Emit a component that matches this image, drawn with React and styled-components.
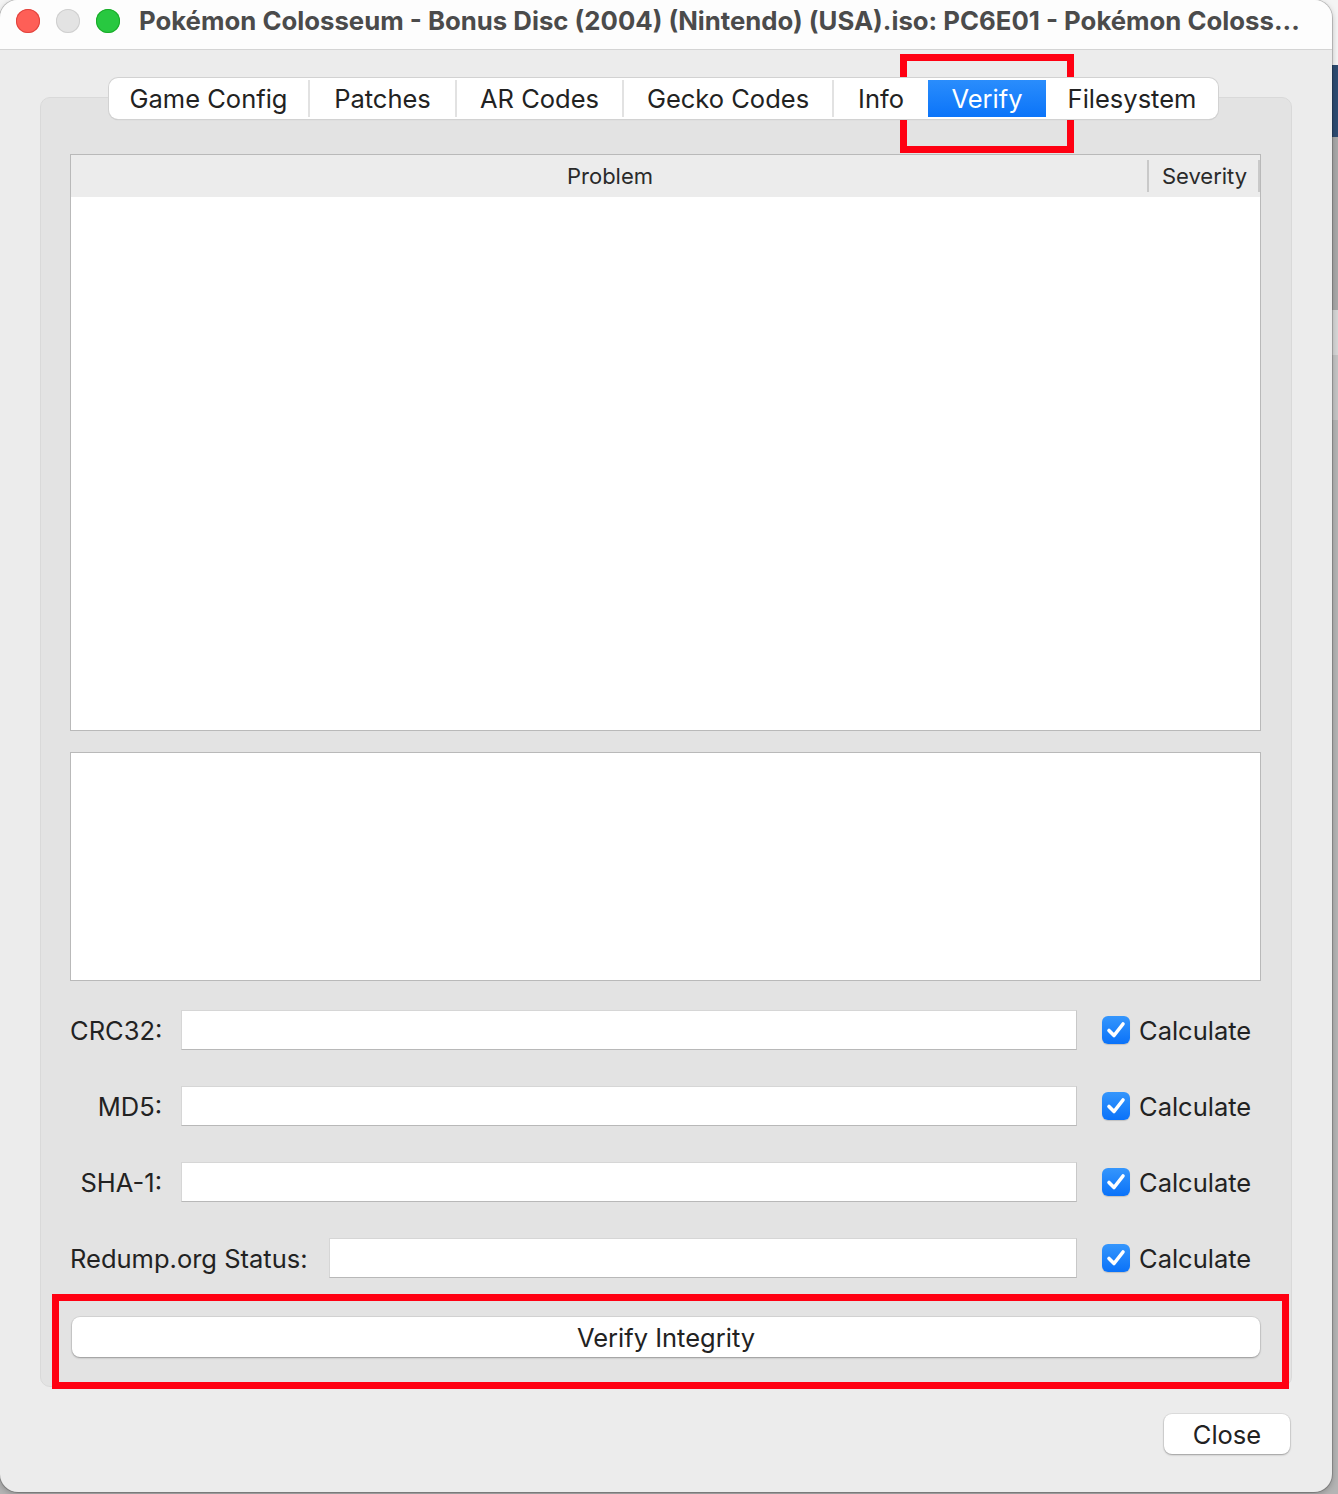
import React from 'react';
import styled, { createGlobalStyle } from 'styled-components';

const GlobalStyle = createGlobalStyle`
  html, body {
    margin: 0;
    padding: 0;
    background: #a9a9a9;
  }
  body {
    font-family: Inter, "Noto Sans", "Liberation Sans", sans-serif;
    color: #222;
    -webkit-font-smoothing: antialiased;
  }
`;

const Desktop = styled.div`
  position: relative;
  width: 1338px;
  height: 1494px;
  overflow: hidden;
  background: linear-gradient(
    to bottom,
    #f4f4f4 0 65px,
    #2d4b71 65px 137px,
    #a9a9a9 137px 310px,
    #d6d6d6 310px 355px,
    #c4c4c4 355px 420px,
    #b4b4b4 420px
  );
`;

const Window = styled.div`
  width: 1332px;
  height: 1492px;
  border-radius: 18px;
  background: #ececec;
  box-shadow: 0 0 0 1px rgba(0, 0, 0, 0.18), 0 2px 6px rgba(0, 0, 0, 0.25);
  overflow: hidden;
  display: flex;
  flex-direction: column;
`;

const TitleBar = styled.div`
  height: 50px;
  box-sizing: border-box;
  flex: none;
  display: flex;
  align-items: center;
  padding: 0 0 8px 16px;
  background: #fdfdfd;
  border-bottom: 1px solid #d4d4d4;
`;

const Lights = styled.div`
  display: flex;
  gap: 16px;
`;

const Light = styled.span`
  width: 24px;
  height: 24px;
  border-radius: 50%;
  background: ${p => p.$color};
  box-shadow: inset 0 0 0 1px ${p => p.$rim};
`;

const Title = styled.div`
  margin-left: 19px;
  font-size: 25.75px;
  font-weight: 700;
  color: #4b4b4b;
  white-space: nowrap;
`;

const Body = styled.div`
  flex: 1;
  display: flex;
  flex-direction: column;
  padding: 28px 40px 0 40px;
`;

const TabBar = styled.div`
  position: relative;
  z-index: 1;
  align-self: center;
  margin-left: -5px;
  display: flex;
  height: 41px;
  box-sizing: border-box;
  background: #fff;
  border-radius: 9px;
  box-shadow: 0 0 0 1px #d2d2d2, 0 1px 1px rgba(0, 0, 0, 0.18);
  margin-bottom: -22px;
`;

const Tab = styled.div`
  box-sizing: border-box;
  width: ${p => p.$w}px;
  display: flex;
  align-items: center;
  justify-content: center;
  font-size: 25.5px;
  color: ${p => (p.$active ? '#fff' : '#222')};
  background: ${p => (p.$active ? 'linear-gradient(#2a8dfc, #0b74f9)' : 'transparent')};
  margin: ${p => (p.$active || p.$sep ? '2px 0' : '0')};
  border-left: ${p => (p.$sep ? '2px solid #e2e2e2' : 'none')};
  white-space: nowrap;
  overflow: hidden;
`;

const Panel = styled.div`
  background: #e3e3e3;
  border: 1px solid #d9d9d9;
  border-radius: 10px;
  padding: 56px 30px 29px 29px;
  display: flex;
  flex-direction: column;
`;

const Table = styled.div`
  height: 577px;
  box-sizing: border-box;
  border: 1px solid #b9b9b9;
  background: #fff;
  display: flex;
  flex-direction: column;
`;

const TableHead = styled.div`
  height: 42px;
  display: flex;
  background: #ececec;
`;

const HeadCell = styled.div`
  display: flex;
  align-items: center;
  justify-content: center;
  font-size: 22px;
  color: #2a2a2a;
  ${p => (p.$grow ? 'flex: 1;' : `width: ${p.$w}px;`)}
  position: relative;
  &::after {
    content: '';
    position: absolute;
    right: 0;
    top: 5px;
    bottom: 5px;
    width: 2px;
    background: #c9c9c9;
  }
`;

const Details = styled.div`
  margin-top: 21px;
  height: 229px;
  box-sizing: border-box;
  border: 1px solid #b9b9b9;
  background: #fff;
`;

const HashList = styled.div`
  margin-top: 29px;
  display: flex;
  flex-direction: column;
  gap: 36px;
`;

const HashRow = styled.div`
  display: flex;
  align-items: center;
  height: 40px;
`;

const Label = styled.div`
  font-size: 25.5px;
  color: #222;
  white-space: nowrap;
  text-align: right;
  ${p => (p.$w ? `width: ${p.$w}px;` : '')}
  margin-right: ${p => p.$gap}px;
`;

const Field = styled.div`
  flex: 1;
  align-self: stretch;
  background: #fff;
  border: 1px solid #d6d6d6;
  border-bottom-color: #b8b8b8;
  border-right-color: #c8c8c8;
  box-sizing: border-box;
`;

const CheckGroup = styled.label`
  width: 159px;
  margin-left: 25px;
  display: flex;
  align-items: center;
  gap: 9px;
  font-size: 25.5px;
  color: #222;
`;

const Box = styled.span`
  width: 28px;
  height: 28px;
  border-radius: 6px;
  background: linear-gradient(#3596fc, #0a72f9);
  display: flex;
  align-items: center;
  justify-content: center;
  box-shadow: 0 1px 1px rgba(0, 0, 0, 0.15);
`;

const WideButton = styled.div`
  margin-top: 39px;
  margin-left: 2px;
  margin-right: 1px;
  height: 40px;
  border-radius: 8px;
  background: #fff;
  box-shadow: 0 0 0 1px rgba(0, 0, 0, 0.06), 0 1px 2px rgba(0, 0, 0, 0.3);
  display: flex;
  align-items: center;
  justify-content: center;
  font-size: 25.5px;
  color: #222;
`;

const Footer = styled.div`
  display: flex;
  justify-content: flex-end;
  padding: 27px 2px 0 0;
`;

const CloseButton = styled.div`
  width: 126px;
  height: 40px;
  border-radius: 8px;
  background: #fff;
  box-shadow: 0 0 0 1px rgba(0, 0, 0, 0.06), 0 1px 2px rgba(0, 0, 0, 0.3);
  display: flex;
  align-items: center;
  justify-content: center;
  font-size: 25.5px;
  color: #222;
`;

const Marker = styled.div`
  position: absolute;
  left: ${p => p.$x}px;
  top: ${p => p.$y}px;
  width: ${p => p.$w}px;
  height: ${p => p.$h}px;
  box-sizing: border-box;
  border: 7px solid #ff0012;
  pointer-events: none;
`;

const tabs = [
  { name: 'Game Config', w: 199 },
  { name: 'Patches', w: 147 },
  { name: 'AR Codes', w: 167 },
  { name: 'Gecko Codes', w: 210 },
  { name: 'Info', w: 96 },
  { name: 'Verify', w: 118, active: true },
  { name: 'Filesystem', w: 172 },
];

const hashes = [
  { label: 'CRC32:', w: 92, gap: 19 },
  { label: 'MD5:', w: 92, gap: 19 },
  { label: 'SHA-1:', w: 92, gap: 19 },
  { label: 'Redump.org Status:', gap: 21 },
];

function Check() {
  return (
    <Box>
      <svg width="22" height="22" viewBox="0 0 22 22">
        <path d="M4 11.5 L9 16.5 L18 5" fill="none" stroke="#fff" strokeWidth="3.6" strokeLinecap="round" strokeLinejoin="round" />
      </svg>
    </Box>
  );
}

export default function App() {
  return (
    <Desktop>
      <GlobalStyle />
      <Window>
        <TitleBar>
          <Lights>
            <Light $color="#fe5f57" $rim="#e0443e" />
            <Light $color="#e3e3e3" $rim="#cfcfcf" />
            <Light $color="#28c840" $rim="#1aab29" />
          </Lights>
          <Title>Pokémon Colosseum - Bonus Disc (2004) (Nintendo) (USA).iso: PC6E01 - Pokémon Coloss...</Title>
        </TitleBar>
        <Body>
          <TabBar>
            {tabs.map((t, i) => {
              const prev = tabs[i - 1];
              const sep = i > 0 && !t.active && !(prev && prev.active);
              return (
                <Tab key={t.name} $w={t.w} $active={t.active} $sep={sep}>
                  {t.name}
                </Tab>
              );
            })}
          </TabBar>
          <Panel>
            <Table>
              <TableHead>
                <HeadCell $grow>Problem</HeadCell>
                <HeadCell $w={111}>Severity</HeadCell>
              </TableHead>
            </Table>
            <Details />
            <HashList>
              {hashes.map(h => (
                <HashRow key={h.label}>
                  <Label $w={h.w} $gap={h.gap}>{h.label}</Label>
                  <Field />
                  <CheckGroup>
                    <Check />
                    Calculate
                  </CheckGroup>
                </HashRow>
              ))}
            </HashList>
            <WideButton>Verify Integrity</WideButton>
          </Panel>
          <Footer>
            <CloseButton>Close</CloseButton>
          </Footer>
        </Body>
      </Window>
      <Marker $x={900} $y={54} $w={174} $h={99} />
      <Marker $x={52} $y={1294} $w={1237} $h={95} />
    </Desktop>
  );
}
